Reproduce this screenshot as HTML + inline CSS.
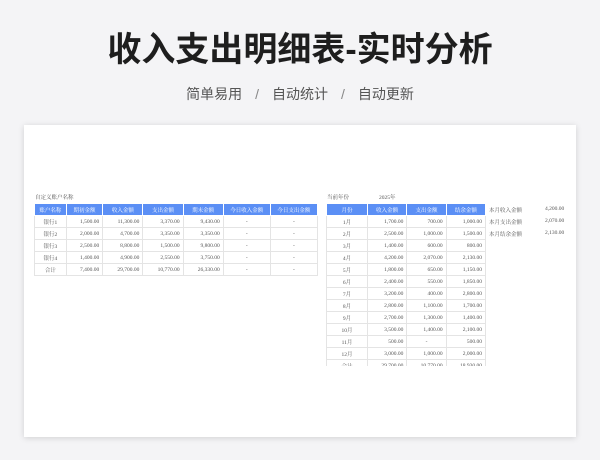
<!DOCTYPE html><html><head><meta charset="utf-8"><style>
body{margin:0;width:600px;height:460px;background:#f4f4f6;font-family:"Liberation Sans","Noto Sans CJK SC",sans-serif;position:relative;overflow:hidden}
.t{position:absolute;left:0;width:600px;text-align:center;top:22px;font-size:34px;font-weight:bold;color:#1e1e1e;letter-spacing:0px}
.s{position:absolute;left:0;width:600px;text-align:center;top:84px;font-size:14px;color:#555}
.s span{margin:0 13px;color:#888}
.card{position:absolute;left:24px;top:125px;width:552px;height:312px;background:#fff;box-shadow:0 1px 6px rgba(0,0,0,.15)}
table{position:absolute;border-collapse:collapse;font-family:"Liberation Serif","Noto Serif CJK SC",serif;font-size:5.5px;color:#555}
td{border:1px solid #e4e4e4;padding:0 3px;height:11px;text-align:right;white-space:nowrap}
th{background:#5b8ff5;color:#fff;font-weight:normal;border:1px solid #fff;height:11px;padding:0}
td.c{text-align:center}
.l{position:absolute;font-family:"Liberation Serif","Noto Serif CJK SC",serif;font-size:5.5px;color:#555}
</style></head><body>
<div class="t">收入支出明细表-实时分析</div>
<div class="s">简单易用<span>/</span>自动统计<span>/</span>自动更新</div>
<div class="card"></div>
<div class="l" style="left:35px;top:193px">自定义账户名称</div>
<table style="left:34px;top:203px;width:284px">
<tr><th>账户名称</th><th>期初金额</th><th>收入金额</th><th>支出金额</th><th>期末金额</th><th>今日收入金额</th><th>今日支出金额</th></tr>
<tr><td class="c">银行1</td><td>1,500.00</td><td>11,300.00</td><td>3,370.00</td><td>9,430.00</td><td class="c">-</td><td class="c">-</td></tr>
<tr><td class="c">银行2</td><td>2,000.00</td><td>4,700.00</td><td>3,350.00</td><td>3,350.00</td><td class="c">-</td><td class="c">-</td></tr>
<tr><td class="c">银行3</td><td>2,500.00</td><td>8,800.00</td><td>1,500.00</td><td>9,800.00</td><td class="c">-</td><td class="c">-</td></tr>
<tr><td class="c">银行4</td><td>1,400.00</td><td>4,900.00</td><td>2,550.00</td><td>3,750.00</td><td class="c">-</td><td class="c">-</td></tr>
<tr><td class="c">合计</td><td>7,400.00</td><td>29,700.00</td><td>10,770.00</td><td>26,330.00</td><td class="c">-</td><td class="c">-</td></tr>
</table>
<div class="l" style="left:327px;top:193px">当前年份</div>
<div class="l" style="left:379px;top:193px">2025年</div>
<table style="left:326px;top:203px;width:160px">
<tr><th style="width:40px">月份</th><th>收入金额</th><th>支出金额</th><th>结余金额</th></tr>
<tr><td class="c">1月</td><td>1,700.00</td><td>700.00</td><td>1,000.00</td></tr>
<tr><td class="c">2月</td><td>2,500.00</td><td>1,000.00</td><td>1,500.00</td></tr>
<tr><td class="c">3月</td><td>1,400.00</td><td>600.00</td><td>800.00</td></tr>
<tr><td class="c">4月</td><td>4,200.00</td><td>2,070.00</td><td>2,130.00</td></tr>
<tr><td class="c">5月</td><td>1,800.00</td><td>650.00</td><td>1,150.00</td></tr>
<tr><td class="c">6月</td><td>2,400.00</td><td>550.00</td><td>1,850.00</td></tr>
<tr><td class="c">7月</td><td>3,200.00</td><td>400.00</td><td>2,800.00</td></tr>
<tr><td class="c">8月</td><td>2,800.00</td><td>1,100.00</td><td>1,700.00</td></tr>
<tr><td class="c">9月</td><td>2,700.00</td><td>1,300.00</td><td>1,400.00</td></tr>
<tr><td class="c">10月</td><td>3,500.00</td><td>1,400.00</td><td>2,100.00</td></tr>
<tr><td class="c">11月</td><td>500.00</td><td class="c">-</td><td>500.00</td></tr>
<tr><td class="c">12月</td><td>3,000.00</td><td>1,000.00</td><td>2,000.00</td></tr>
<tr><td class="c">合计</td><td>29,700.00</td><td>10,770.00</td><td>18,930.00</td></tr>
</table>
<div style="position:absolute;left:326px;top:366px;width:162px;height:10px;background:#fff"></div>
<div class="l" style="left:489px;top:206px">本月收入金额</div><div class="l" style="left:545px;top:206px">4,200.00</div>
<div class="l" style="left:489px;top:218px">本月支出金额</div><div class="l" style="left:545px;top:218px">2,070.00</div>
<div class="l" style="left:489px;top:230px">本月结余金额</div><div class="l" style="left:545px;top:230px">2,130.00</div>
</body></html>
